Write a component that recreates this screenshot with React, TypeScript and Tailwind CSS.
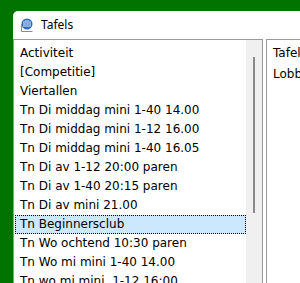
import React from "react";

const items = [
  "Activiteit",
  "[Competitie]",
  "Viertallen",
  "Tn Di middag mini 1-40 14.00",
  "Tn Di middag mini 1-12 16.00",
  "Tn Di middag mini 1-40 16.05",
  "Tn Di av 1-12 20:00 paren",
  "Tn Di av 1-40 20:15 paren",
  "Tn Di av mini 21.00",
  "Tn Beginnersclub",
  "Tn Wo ochtend 10:30 paren",
  "Tn Wo mi mini 1-40 14.00",
  "Tn wo mi mini  1-12 16:00",
];

const AppIcon = () => (
  <svg width="14" height="15" viewBox="0 0 14 15">
    <circle cx="7" cy="6" r="5.5" fill="#2b6fc2" />
    <path d="M4 3 v6 M6 2 v7 M8 2 v7 M10 3 v6" stroke="#e8eef8" strokeWidth="1" />
    <path d="M1.5 6 v7.5 h11" stroke="#8c8c8c" strokeWidth="1" fill="none" />
  </svg>
);

const App = () => {
  return (
    <div
      className="w-[300px] h-[283px] overflow-hidden bg-[#017301] pt-[11px] pl-[13px]"
      style={{ fontFamily: '"DejaVu Sans", Verdana, sans-serif' }}
    >
      <div className="bg-white rounded-tl-[5px] h-full flex flex-col">
        <div className="h-[28px] shrink-0 flex items-center pl-[7px] gap-[7px]">
          <AppIcon />
          <span
            className="text-[12px] text-black"
            style={{ fontFamily: '"Noto Sans", "Open Sans", sans-serif' }}
          >
            Tafels
          </span>
        </div>
        <div className="flex flex-1 min-h-0">
          <div className="w-[250px] flex border-t border-l border-r border-[#9a9a9a]">
            <ul className="w-[232px] pl-[1px] pt-[4px] text-[12px] text-black">
              {items.map((item, i) => (
                <li
                  key={i}
                  className={
                    i === 9
                      ? "h-[19px] leading-[17px] pl-[4px] whitespace-pre bg-[#cce8ff] border border-dotted border-black"
                      : "h-[19px] leading-[19px] pl-[5px] whitespace-pre"
                  }
                >
                  {item}
                </li>
              ))}
            </ul>
            <div className="w-[16px] bg-[#f0f0f0] flex justify-center pt-[17px]">
              <div className="w-[2px] h-[156px] bg-[#8a8a8a]" />
            </div>
          </div>
          <div className="w-[3px]" />
          <div className="flex-1 border-t border-l border-[#9a9a9a] pl-[6px] pt-[4px] text-[12px] text-black whitespace-nowrap overflow-hidden">
            <div className="h-[21px] leading-[18px]">Tafel</div>
            <div className="leading-[18px]">Lobby</div>
          </div>
        </div>
      </div>
    </div>
  );
};

export default App;
